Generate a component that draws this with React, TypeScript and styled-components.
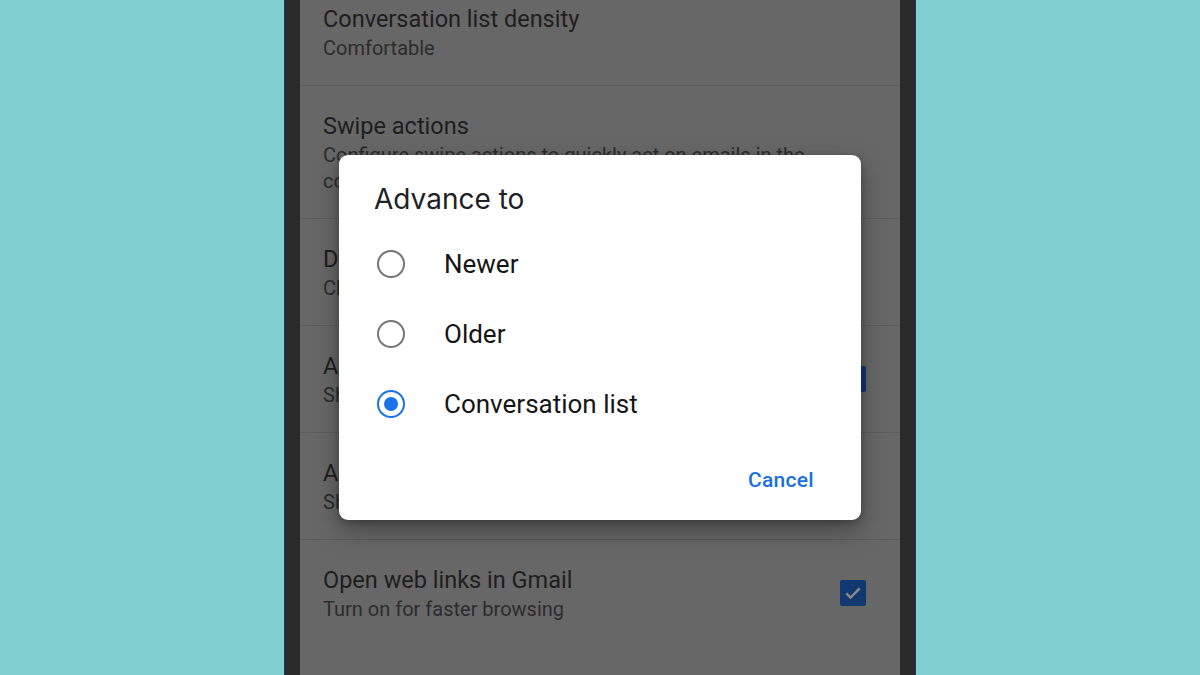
import styled, { createGlobalStyle } from 'styled-components'

const GlobalStyle = createGlobalStyle`
  html, body {
    margin: 0;
    padding: 0;
    background: #81cfd1;
    font-family: Roboto, "Noto Sans", sans-serif;
  }
`

const Page = styled.div`
  display: flex;
  justify-content: center;
  height: 675px;
  overflow: hidden;
`

const Phone = styled.div`
  width: 600px;
  height: 100%;
  border-left: 15px solid #2a2a2a;
  border-right: 15px solid #2a2a2a;
  box-shadow: -1px 0 0 #1f3f40, 1px 0 0 #1f3f40;
`

const Screen = styled.div`
  position: relative;
  height: 100%;
  background: #676767;
  overflow: hidden;
`

const List = styled.div`
  margin-top: -21px;
`

const Item = styled.div`
  display: flex;
  align-items: center;
  gap: 20px;
  padding: 24px 34px 24px 23px;
  border-bottom: 1px solid #5b5b5b;
  &:last-child {
    border-bottom: none;
  }
`

const ItemText = styled.div`
  flex: 1;
  min-width: 0;
`

const ItemTitle = styled.div`
  font-size: 23.5px;
  line-height: 32px;
  color: #1e1e1e;
`

const ItemSub = styled.div`
  font-size: 20px;
  line-height: 26px;
  color: #2c2c2c;
  max-width: 500px;
`

const Check = styled.div`
  flex: none;
  width: 26px;
  height: 26px;
  border-radius: 2px;
  background: #123870;
  display: flex;
  align-items: center;
  justify-content: center;
`

const Dialog = styled.div`
  position: absolute;
  left: 39px;
  top: 155px;
  width: 522px;
  height: 365px;
  box-sizing: border-box;
  background: #ffffff;
  border-radius: 9px;
  box-shadow: 0 10px 24px rgba(0, 0, 0, 0.35), 0 2px 6px rgba(0, 0, 0, 0.2);
  display: flex;
  flex-direction: column;
  padding-bottom: 16px;
`

const DialogTitle = styled.div`
  margin: 28px 0 14px 35px;
  font-family: Inter, Roboto, sans-serif;
  font-size: 28px;
  line-height: 32px;
  color: #202124;
`

const Option = styled.label`
  display: flex;
  align-items: center;
  gap: 39px;
  height: 70px;
  padding-left: 38px;
  font-size: 26px;
  color: #161616;
`

const Radio = styled.span<{ $checked?: boolean }>`
  flex: none;
  box-sizing: border-box;
  width: 28px;
  height: 28px;
  border-radius: 50%;
  border: 2.5px solid ${p => (p.$checked ? '#1a73e8' : '#767676')};
  display: flex;
  align-items: center;
  justify-content: center;
  &::after {
    content: '';
    width: 14px;
    height: 14px;
    border-radius: 50%;
    background: #1a73e8;
    display: ${p => (p.$checked ? 'block' : 'none')};
  }
`

const Actions = styled.div`
  display: flex;
  justify-content: flex-end;
  align-items: center;
  height: 48px;
  margin-top: auto;
  padding-right: 39px;
`

const TextButton = styled.button`
  border: none;
  background: none;
  padding: 0 8px;
  font-family: Roboto, sans-serif;
  font-size: 21px;
  font-weight: 500;
  letter-spacing: 0.3px;
  color: #1a6fe0;
`

const settings = [
  { title: 'Conversation list density', sub: 'Comfortable' },
  {
    title: 'Swipe actions',
    sub: 'Configure swipe actions to quickly act on emails in the conversation list',
  },
  { title: 'Default reply action', sub: 'Choose your default reply setting' },
  { title: 'Auto-fit messages', sub: 'Shrink messages to fit the screen', check: true },
  { title: 'Auto-advance', sub: 'Show conversation list after you archive or delete' },
  { title: 'Open web links in Gmail', sub: 'Turn on for faster browsing', check: true },
]

const options = ['Newer', 'Older', 'Conversation list']

export default function App() {
  return (
    <>
      <GlobalStyle />
      <Page>
        <Phone>
          <Screen>
            <List>
              {settings.map(s => (
                <Item key={s.title}>
                  <ItemText>
                    <ItemTitle>{s.title}</ItemTitle>
                    <ItemSub>{s.sub}</ItemSub>
                  </ItemText>
                  {s.check && (
                    <Check>
                      <svg width="20" height="20" viewBox="0 0 24 24">
                        <path d="M4 12.5l5 5L20 6.5" fill="none" stroke="#8a8a8a" strokeWidth="3" />
                      </svg>
                    </Check>
                  )}
                </Item>
              ))}
            </List>
            <Dialog>
              <DialogTitle>Advance to</DialogTitle>
              {options.map(o => (
                <Option key={o}>
                  <Radio $checked={o === 'Conversation list'} />
                  {o}
                </Option>
              ))}
              <Actions>
                <TextButton>Cancel</TextButton>
              </Actions>
            </Dialog>
          </Screen>
        </Phone>
      </Page>
    </>
  )
}
